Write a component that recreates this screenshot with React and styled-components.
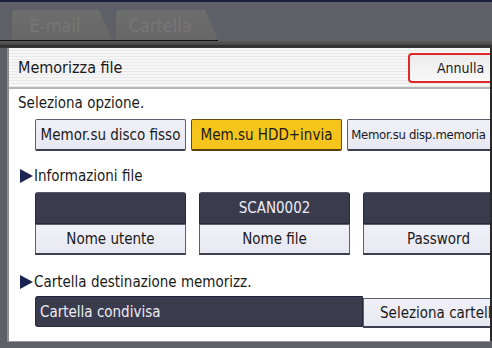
import React from 'react'
import styled, { createGlobalStyle } from "styled-components";

const Global = createGlobalStyle`
    html, body { margin:0; padding:0; }
    body {
        background:#5f5f67;
        font-family:"DejaVu Sans", sans-serif;
        font-stretch:condensed;
    }
`;

const App = () => {
    return (
        <SCREEN>
            <Global />
            <TabBar>
                <Tab>E-mail</Tab>
                <Tab>Cartella</Tab>
            </TabBar>
            <Band />
            <Panel>
                <Header>
                    <Title>Memorizza file</Title>
                    <CancelButton>Annulla</CancelButton>
                </Header>
                <Caption>Seleziona opzione.</Caption>
                <OptionRow>
                    <OptionButton>Memor.su disco fisso</OptionButton>
                    <OptionButton active>Mem.su HDD+invia</OptionButton>
                    <OptionButton small>Memor.su disp.memoria</OptionButton>
                </OptionRow>
                <SectionTitle>Informazioni file</SectionTitle>
                <FieldRow>
                    <FieldCol>
                        <Field />
                        <FieldLabel>Nome utente</FieldLabel>
                    </FieldCol>
                    <FieldCol>
                        <Field>SCAN0002</Field>
                        <FieldLabel>Nome file</FieldLabel>
                    </FieldCol>
                    <FieldCol>
                        <Field />
                        <FieldLabel>Password</FieldLabel>
                    </FieldCol>
                </FieldRow>
                <SectionTitle top="18px">Cartella destinazione memorizz.</SectionTitle>
                <FolderRow>
                    <FolderField>Cartella condivisa</FolderField>
                    <FolderButton>Seleziona cartella</FolderButton>
                </FolderRow>
            </Panel>
        </SCREEN>
    )
}

const SCREEN = styled.div`
    width:492px;
    height:348px;
    overflow:hidden;
    box-sizing:border-box;
    border-top:2px solid #1b1f3b;
    background:#5f5f67;
    display:flex;
    flex-direction:column;
`;

const TabBar = styled.div`
    box-sizing:content-box;
    height:30px;
    width:206px;
    padding:8px 0 0 12px;
    display:flex;
    gap:4px;
    align-items:flex-end;
    border-bottom:1px solid #111;
`;

const Tab = styled.div`
    width:100px;
    height:30px;
    box-sizing:border-box;
    padding-right:14px;
    background:linear-gradient(#6e6e6e, #666);
    clip-path:polygon(0 0, calc(100% - 13px) 0, 100% 100%, 0 100%);
    border-radius:4px 0 0 0;
    color:#777;
    font-size:18px;
    display:flex;
    align-items:center;
    justify-content:center;
    &:nth-child(2){
        width:102px;
    }
`;

const Band = styled.div`
    height:7px;
    background:linear-gradient(#5a5a5a 0%, #4a4a4a 50%, #2c2c2c 55%, #3a3a3a 100%);
`;

const Panel = styled.div`
    margin-left:7px;
    flex:1;
    margin-bottom:6px;
    background:#fff;
    border-left:2px solid #8d8d8d;
    border-right:2px solid #2a2a2a;
    border-bottom:1px solid #9a9a9a;
    overflow:hidden;
    display:flex;
    flex-direction:column;
`;

const Header = styled.div`
    height:39px;
    flex-shrink:0;
    display:flex;
    align-items:center;
    justify-content:space-between;
    padding-left:9px;
    background:repeating-linear-gradient(#f6f6f6 0px, #f6f6f6 2px, #e9e9e9 2px, #e9e9e9 3px);
    border-bottom:2px solid #b5b5b5;
    color:#1a1a1a;
`;

const Title = styled.div`
    font-size:16px;
`;

const CancelButton = styled.div`
    width:100px;
    height:30px;
    margin-right:-18px;
    box-sizing:border-box;
    border:2px solid #e0282a;
    border-radius:4px;
    background:linear-gradient(#ececec, #f8f8f8);
    font-size:14px;
    padding-left:27px;
    display:flex;
    align-items:center;
    color:#1a1a1a;
`;

const Caption = styled.div`
    font-size:15px;
    color:#1a1a1a;
    margin:5px 0 0 9px;
`;

const OptionRow = styled.div`
    display:flex;
    gap:5px;
    margin:7px 0 0 26px;
`;

const OptionButton = styled.div`
    flex-shrink:0;
    width:151px;
    height:32px;
    box-sizing:border-box;
    border:1px solid ${p => p.active ? "#6a4c08" : "#5f5f70"};
    border-bottom:2px solid ${p => p.active ? "#5a3e05" : "#3e3e50"};
    border-radius:2px;
    background:${p => p.active ? "#f5c51c" : "linear-gradient(#f0f0f8, #e8e8f2)"};
    font-size:${p => p.small ? "13px" : "15px"};
    letter-spacing:${p => p.small ? "-0.3px" : "0"};
    padding-right:${p => p.small ? "8px" : "0"};
    color:#1a1a1a;
    display:flex;
    align-items:center;
    justify-content:center;
    white-space:nowrap;
`;

const SectionTitle = styled.div`
    display:flex;
    align-items:center;
    gap:1px;
    font-size:15px;
    color:#1a1a1a;
    margin:${p => p.top || "16px"} 0 0 11px;
    &::before{
        content:"";
        width:0;
        height:0;
        border-top:7px solid transparent;
        border-bottom:7px solid transparent;
        border-left:13px solid #1b2350;
    }
`;

const FieldRow = styled.div`
    display:flex;
    gap:13px;
    margin:7px 0 0 26px;
`;

const FieldCol = styled.div`
    flex-shrink:0;
    width:151px;
    display:flex;
    flex-direction:column;
`;

const Field = styled.div`
    height:32px;
    box-sizing:border-box;
    background:#3b3b4e;
    border:1px solid #2a2a3c;
    border-top-color:#55556a;
    border-radius:3px 3px 0 0;
    color:#ececf4;
    font-size:15px;
    display:flex;
    align-items:center;
    justify-content:center;
`;

const FieldLabel = styled.div`
    height:31px;
    box-sizing:border-box;
    background:linear-gradient(#f0f0f8, #e8e8f2);
    border:1px solid #5f5f70;
    border-bottom:2px solid #3e3e50;
    font-size:15px;
    color:#1a1a1a;
    display:flex;
    align-items:center;
    justify-content:center;
`;

const FolderRow = styled.div`
    display:flex;
    align-items:flex-start;
    margin:5px 0 0 26px;
`;

const FolderField = styled.div`
    flex-shrink:0;
    width:328px;
    height:31px;
    box-sizing:border-box;
    background:#3b3b4e;
    border:1px solid #2a2a3c;
    border-top-color:#1f2440;
    border-radius:3px 0 0 3px;
    color:#ececf4;
    font-size:15px;
    padding-left:4px;
    display:flex;
    align-items:center;
`;

const FolderButton = styled.div`
    flex-shrink:0;
    width:150px;
    height:30px;
    margin-top:2px;
    box-sizing:border-box;
    background:linear-gradient(#f0f0f8, #e8e8f2);
    border:1px solid #5f5f70;
    border-bottom:2px solid #3e3e50;
    font-size:15px;
    color:#1a1a1a;
    padding-left:16px;
    display:flex;
    align-items:center;
    white-space:nowrap;
`;

export default App
